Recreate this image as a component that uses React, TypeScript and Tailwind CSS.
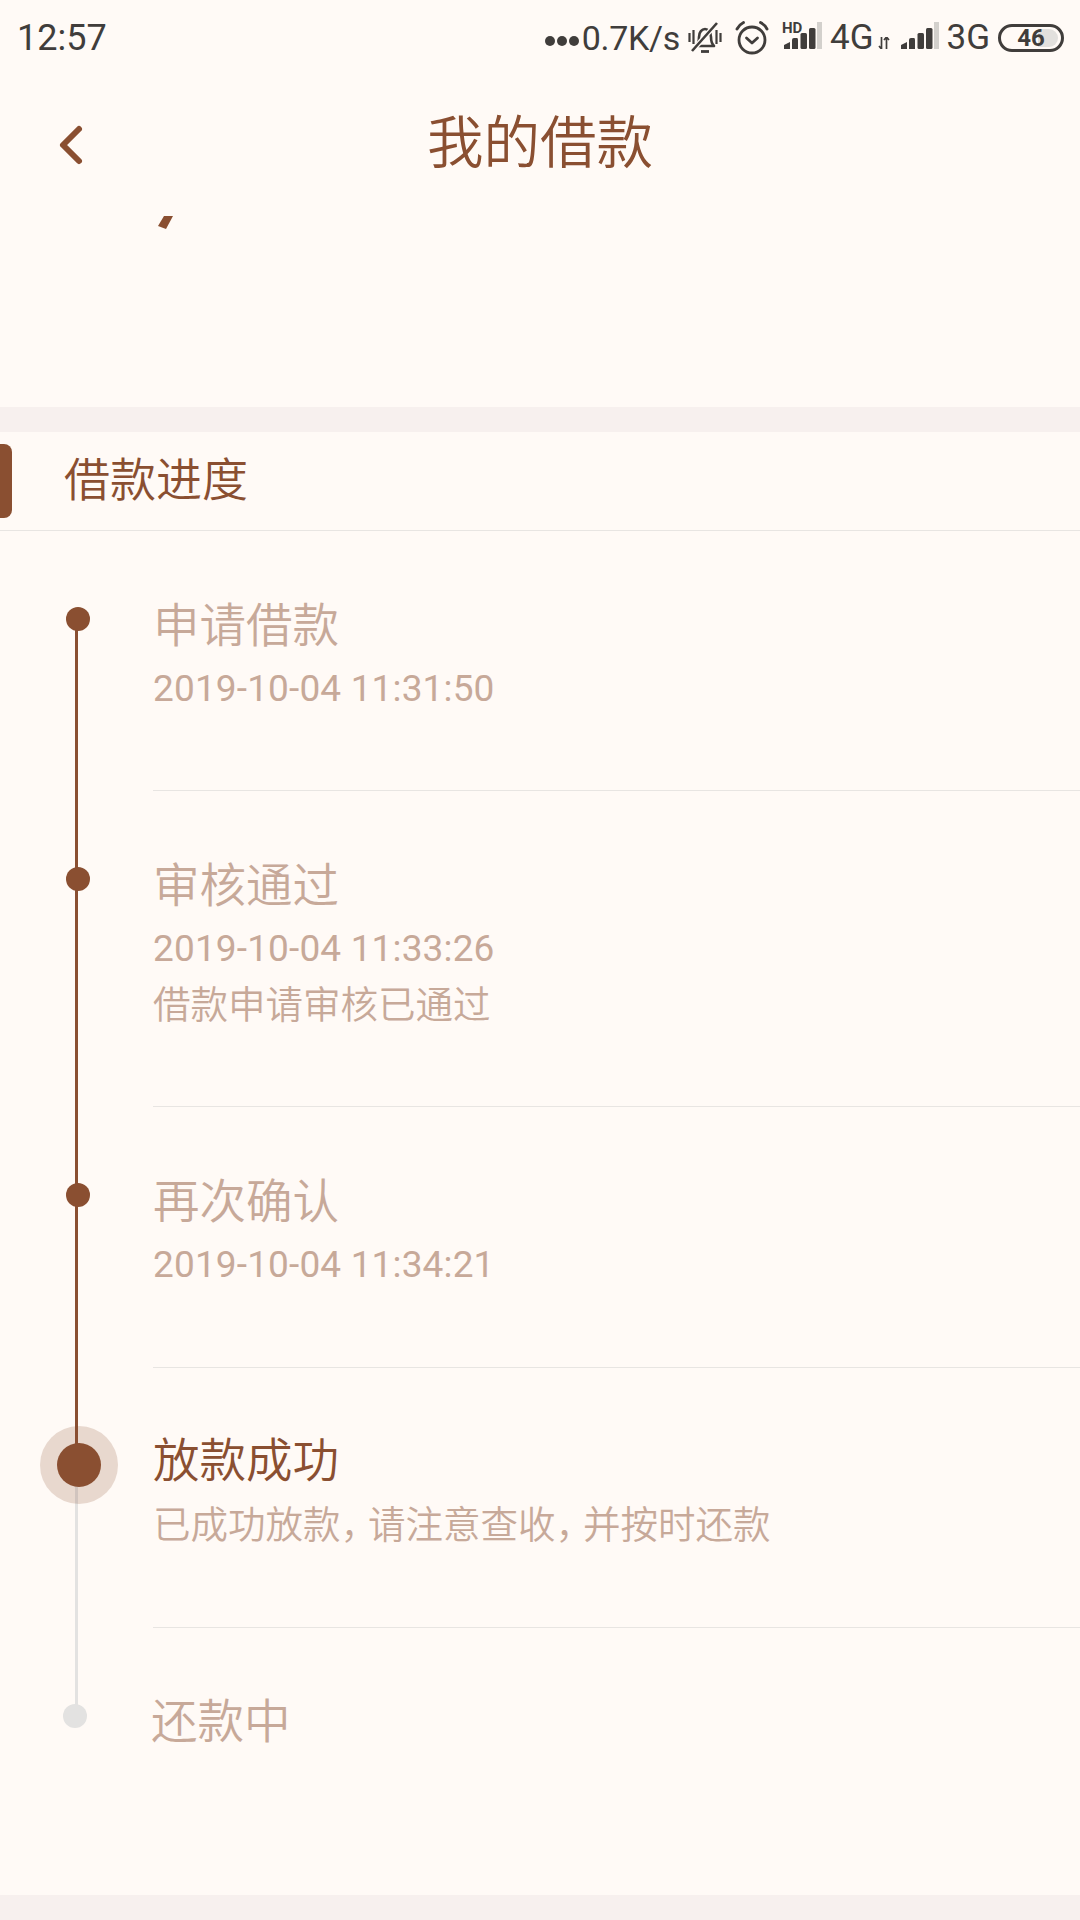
import type { ReactNode } from 'react';
import { ChevronLeft } from 'lucide-react';

const cjk = "font-['Noto_Sans_CJK_SC','Noto_Sans',sans-serif]";
const roboto = "font-['Roboto','Noto_Sans_CJK_SC',sans-serif]";

function SignalBars({ hd }: { hd?: boolean }) {
  return (
    <div className="relative h-[30px] w-[40px] shrink-0">
      <svg width="40" height="30" viewBox="0 0 40 30" className="absolute left-0 top-[-3px]">
        <path d="M2 29v-4l6-3v7z" fill="#403d3b" />
        <path d="M10 29v-9q0-2 2-2h3q1 0 1 2v9z" fill="#403d3b" />
        <rect x="18.500" y="13" width="6.500" height="16" rx="1.500" fill="#403d3b" />
        <rect x="27" y="8" width="6.500" height="21" rx="1.500" fill="#403d3b" />
        <rect x="35" y="2" width="5" height="27" fill="#d3d0cc" />
      </svg>
      {hd ? (
        <span className="absolute left-0 top-[-2px] text-[15px] font-bold leading-[15px] text-[#403d3b]">HD</span>
      ) : null}
    </div>
  );
}

function StatusBar() {
  return (
    <div className={`flex h-[75px] items-center justify-between pl-[17px] pr-[16px] ${roboto} text-[#403d3b]`}>
      <span className="text-[36px] leading-none">12:57</span>
      <div className="flex items-center">
        <div className="mt-[6px] flex gap-[2px]">
          <span className="h-[10px] w-[10px] rounded-full bg-[#403d3b]" />
          <span className="h-[10px] w-[10px] rounded-full bg-[#403d3b]" />
          <span className="h-[10px] w-[10px] rounded-full bg-[#403d3b]" />
        </div>
        <span className="ml-[3px] text-[34px] leading-none tracking-[-0.3px]">0.7K/s</span>
        <svg width="34" height="34" viewBox="0 0 34 34" fill="none" stroke="#403d3b" className="ml-[8px] shrink-0">
          <path d="M8 25c2-2 3-4 3-9 0-5 3-8 6-8s6 3 6 8c0 5 1 7 3 9z" strokeWidth="2.600" strokeLinejoin="round" />
          <path d="M13 30.500h8" strokeWidth="2.800" />
          <path d="M1.500 12v9M5.500 9v14M32.500 12v9M28.500 9v14" strokeWidth="2.200" />
          <path d="M4 30 29 2" strokeWidth="5" stroke="#fffaf6" />
          <path d="M4 30 29 2" strokeWidth="2.600" />
        </svg>
        <svg width="34" height="34" viewBox="0 0 34 34" fill="none" stroke="#403d3b" strokeWidth="2.800" className="ml-[13px] shrink-0">
          <circle cx="17" cy="19" r="13" />
          <path d="m11.500 17 5.500 5 5.500-5" strokeLinecap="round" strokeLinejoin="round" />
          <path d="M2 8c1.500-3 3.500-5 6.500-6.500M32 8c-1.500-3-3.500-5-6.500-6.500" strokeLinecap="round" />
        </svg>
        <div className="ml-[13px]">
          <SignalBars hd />
        </div>
        <span className="ml-[8px] text-[35px] leading-none">4G</span>
        <svg width="12" height="12" viewBox="0 0 12 12" fill="none" stroke="#403d3b" className="ml-[5px] mt-[10px] shrink-0">
          <path d="M3.500 0v12M1 9l2.500 3M8.500 12V0M6 3l2.500-3 2.500 3" strokeWidth="1.700" />
        </svg>
        <div className="ml-[9px]">
          <SignalBars />
        </div>
        <span className="ml-[7px] text-[35px] leading-none">3G</span>
        <div className="relative ml-[8px] flex h-[28px] w-[66px] items-center justify-center overflow-hidden rounded-full border-[3px] border-[#403d3b]">
          <span className="absolute right-[3px] top-[2px] h-[18px] w-[20px] rounded-r-full bg-[#e2e0dd]" />
          <span className="relative text-[24px] font-bold leading-none">46</span>
        </div>
      </div>
    </div>
  );
}

type Step = {
  title: string;
  date?: string;
  note?: ReactNode;
  height: string;
  topLine: string;
  bottomLine: string;
  state: 'done' | 'current' | 'todo';
};

const comma = <span className="tracking-[-10px]">，</span>;

const steps: Step[] = [
  {
    title: '申请借款',
    date: '2019-10-04 11:31:50',
    height: 'h-[260px]',
    topLine: 'bg-transparent',
    bottomLine: 'bg-[#8a4f31]',
    state: 'done',
  },
  {
    title: '审核通过',
    date: '2019-10-04 11:33:26',
    note: '借款申请审核已通过',
    height: 'h-[316px]',
    topLine: 'bg-[#8a4f31]',
    bottomLine: 'bg-[#8a4f31]',
    state: 'done',
  },
  {
    title: '再次确认',
    date: '2019-10-04 11:34:21',
    height: 'h-[261px]',
    topLine: 'bg-[#8a4f31]',
    bottomLine: 'bg-[#8a4f31]',
    state: 'done',
  },
  {
    title: '放款成功',
    note: (
      <>
        已成功放款{comma}请注意查收{comma}并按时还款
      </>
    ),
    height: 'h-[260px]',
    topLine: 'bg-[#8a4f31]',
    bottomLine: 'bg-[#e3e2e1]',
    state: 'current',
  },
  {
    title: '还款中',
    height: 'h-[267px]',
    topLine: 'bg-[#e3e2e1]',
    bottomLine: 'bg-transparent',
    state: 'todo',
  },
];

function TimelineRow({ step, last }: { step: Step; last: boolean }) {
  const current = step.state === 'current';
  const todo = step.state === 'todo';
  return (
    <div className={`flex ${step.height}`}>
      <div className="relative flex w-[153px] shrink-0 flex-col pl-[75px]">
        <div className={`h-[88px] w-[3px] ${step.topLine}`} />
        <div className={`w-[3px] flex-1 ${step.bottomLine}`} />
        {step.state === 'done' ? (
          <span className="absolute left-[66px] top-[76px] h-[24px] w-[24px] rounded-full bg-[#8a4f31]" />
        ) : null}
        {current ? (
          <span className="absolute left-[40px] top-[58px] flex h-[78px] w-[78px] items-center justify-center rounded-full bg-[#8a4f31]/20">
            <span className="h-[44px] w-[44px] rounded-full bg-[#8a4f31]" />
          </span>
        ) : null}
        {todo ? (
          <span className="absolute left-[63px] top-[76px] h-[24px] w-[24px] rounded-full bg-[#e3e2e1]" />
        ) : null}
      </div>
      <div className={`flex min-w-0 flex-1 flex-col ${step.date ? 'pt-[61px]' : 'pt-[59px]'} ${last ? '' : 'border-b border-[#e8e5e2]'}`}>
        <div className={`${todo ? '-ml-[2px] mt-[1px]' : ''} text-[46.500px] font-[350] leading-[60px] ${current ? 'text-[#8a4f31]' : 'text-[#c7a999]'}`}>
          {step.title}
        </div>
        {step.date ? (
          <div className={`${roboto} mt-[12px] text-[37px] tracking-[0.15px] leading-[50px] text-[#c7a999]`}>{step.date}</div>
        ) : null}
        {step.note ? (
          <div className={`${step.date ? 'mt-[3px]' : 'mt-[10px]'} text-[37.500px] font-[350] leading-[50px] text-[#c7a999]`}>{step.note}</div>
        ) : null}
      </div>
    </div>
  );
}

export default function App() {
  return (
    <div className={`flex h-[1920px] w-[1080px] flex-col overflow-hidden bg-[#fffaf6] ${cjk}`}>
      <StatusBar />
      <header className="relative flex h-[139px] items-center justify-center">
        <ChevronLeft className="absolute left-[39px] top-[38px] text-[#8a4f31]" size={64} strokeWidth={2.25} />
        <h1 className="-translate-y-[6px] text-[56.500px] font-[350] leading-none text-[#8a4f31]">我的借款</h1>
      </header>
      <div className="h-[193px] pl-[157px] pt-[2px]">
        <svg width="16" height="14" viewBox="0 0 16 14">
          <path d="M7 0h9L9 13 1 10z" fill="#8a4f31" />
        </svg>
      </div>
      <div className="h-[25px] bg-[#f7f0ee]" />
      <div className="flex h-[99px] items-center gap-[52px] border-b border-[#e8e5e2]">
        <span className="h-[74px] w-[12px] rounded-r-[8px] bg-[#8a4f31]" />
        <h2 className="-translate-y-[5px] text-[46px] font-[350] leading-none text-[#8a4f31]">借款进度</h2>
      </div>
      <div className="flex flex-col">
        {steps.map((step, index) => (
          <TimelineRow key={step.title} step={step} last={index === steps.length - 1} />
        ))}
      </div>
      <div className="flex-1 bg-[#f7f0ee]" />
    </div>
  );
}
